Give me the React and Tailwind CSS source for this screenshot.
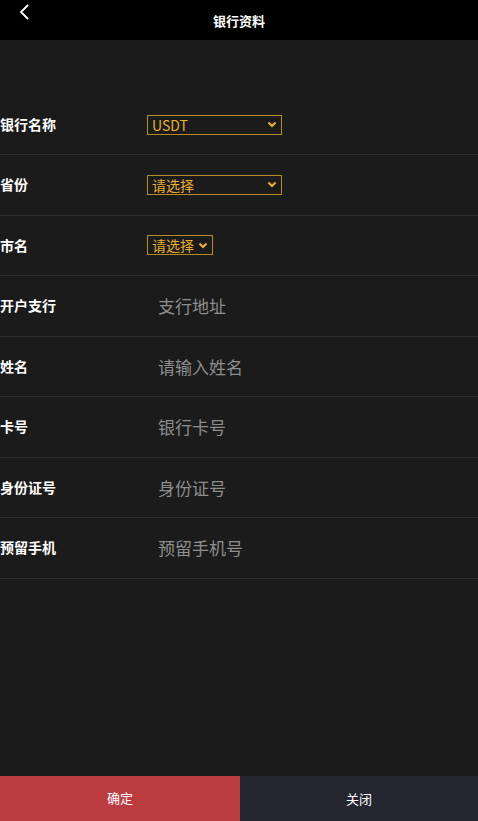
import { useState } from 'react'

const font = { fontFamily: '"Noto Sans CJK SC", "Liberation Sans", sans-serif' }

function Chevron() {
  return (
    <svg width="10" height="7" viewBox="0 0 10 7" className="shrink-0">
      <path d="M1.5 1.5 L5 5 L8.5 1.5" stroke="#e8b030" strokeWidth="2.2" fill="none" />
    </svg>
  )
}

function FakeSelect({ value, wide }) {
  return (
    <div
      className={`flex items-center justify-between h-[20px] border border-[#b88c24] bg-[#1b1b1b] pl-[4px] pr-[4px] ${wide ? 'w-[135px]' : 'w-[66px]'}`}
    >
      <span className="text-[14px] leading-none text-[#e8b02e]">{value}</span>
      <Chevron />
    </div>
  )
}

export default function App() {
  const [form, setForm] = useState({ branch: '', name: '', card: '', idno: '', phone: '' })

  const inputs = [
    { key: 'branch', label: '开户支行', ph: '支行地址' },
    { key: 'name', label: '姓名', ph: '请输入姓名' },
    { key: 'card', label: '卡号', ph: '银行卡号' },
    { key: 'idno', label: '身份证号', ph: '身份证号' },
    { key: 'phone', label: '预留手机', ph: '预留手机号' },
  ]

  return (
    <div className="w-[478px] h-[821px] bg-[#1b1b1b] flex flex-col" style={font}>
      <div className="h-[40px] bg-black flex items-center relative shrink-0">
        <svg width="12" height="16" viewBox="0 0 12 16" className="absolute left-[18px] top-[4px]">
          <path d="M10 1 L3 8 L10 15" stroke="#fff" strokeWidth="1.8" fill="none" />
        </svg>
        <div className="w-full text-center text-[13px] font-semibold text-white pt-[1px]">银行资料</div>
      </div>

      <div className="flex-1 pt-[55px]">
        <div className="h-[60px] flex items-center border-b border-[#2e2e2e]">
          <div className="w-[147px] text-[14px] font-bold text-white">银行名称</div>
          <FakeSelect value="USDT" wide />
        </div>
        <div className="h-[60.5px] flex items-center border-b border-[#2e2e2e]">
          <div className="w-[147px] text-[14px] font-bold text-white">省份</div>
          <FakeSelect value="请选择" wide />
        </div>
        <div className="h-[60.5px] flex items-center border-b border-[#2e2e2e]">
          <div className="w-[147px] text-[14px] font-bold text-white">市名</div>
          <FakeSelect value="请选择" />
        </div>
        {inputs.map((f) => (
          <div key={f.key} className="h-[60.5px] flex items-center border-b border-[#2e2e2e]">
            <div className="w-[147px] text-[14px] font-bold text-white">{f.label}</div>
            <input
              value={form[f.key]}
              onChange={(e) => setForm({ ...form, [f.key]: e.target.value })}
              placeholder={f.ph}
              className="flex-1 bg-transparent outline-none pl-[11px] text-[17px] text-white placeholder:text-[#8e8e8e]"
            />
          </div>
        ))}
      </div>

      <div className="h-[45px] flex shrink-0">
        <button className="w-[240px] bg-[#bb3c40] text-white text-[13px] pb-[2px]">确定</button>
        <button className="flex-1 bg-[#252632] text-white text-[13px]">关闭</button>
      </div>
    </div>
  )
}
